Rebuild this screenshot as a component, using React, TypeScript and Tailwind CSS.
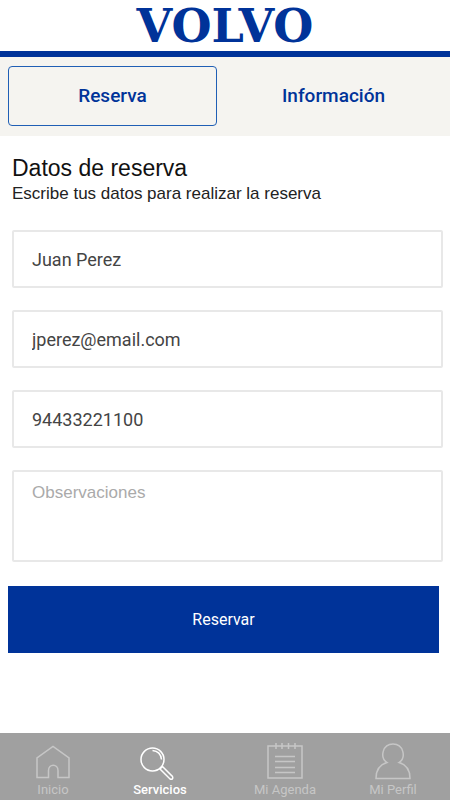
import type { ReactNode } from "react";

interface NavItem {
  label: string;
  icon: ReactNode;
  active?: boolean;
}

const fields = [
  { id: "nombre", label: "Nombre", type: "text", value: "Juan Perez" },
  { id: "email", label: "Email", type: "email", value: "jperez@email.com" },
  { id: "telefono", label: "Teléfono", type: "tel", value: "94433221100" },
];

const navItems: NavItem[] = [
  {
    label: "Inicio",
    icon: (
      <path d="M4 34.5V15L20 3.5L36 15V34.5H25V27.5C25 20.5 15.5 20.5 15.5 27.5V34.5Z" />
    ),
  },
  {
    label: "Servicios",
    active: true,
    icon: (
      <>
        <circle cx="12.5" cy="16.5" r="11.5" />
        <path d="M12.5 7.5C17.5 8 21 11.5 21.5 16.5" />
        <path d="M20 26L22.5 23.5L32.5 33.5C33.5 35.5 32 37 30 36Z" />
      </>
    ),
  },
  {
    label: "Mi Agenda",
    icon: (
      <>
        <path d="M3 3H37V35H3Z" />
        <path d="M11 0V6M17 0V6M23.5 0V6M30 0V6" />
        <path d="M10 13.5H30M10 18.5H30M10 24.5H30M10 29.5H30" />
      </>
    ),
  },
  {
    label: "Mi Perfil",
    icon: (
      <path d="M14 19.5C6.5 14.5 9.5 1 20 1C30.5 1 33.5 14.5 26 19.5C33.5 21.5 37 28 37 35.5H3C3 28 6.5 21.5 14 19.5Z" />
    ),
  },
];

function Header() {
  return (
    <header className="flex h-[57px] items-center justify-center border-b-[6px] border-[#003399] bg-white">
      <span className="font-['DejaVu_Serif',serif] text-[46px] leading-[50px] font-bold text-[#003399]">
        VOLVO
      </span>
    </header>
  );
}

function Tabs() {
  return (
    <div className="grid grid-cols-2 gap-3 bg-[#f5f4f0] pt-[9px] pr-3 pb-[10px] pl-2 text-[19px] font-medium text-[#003399]">
      <button
        type="button"
        className="h-[60px] rounded-[4px] border border-[#1f5fb5]"
      >
        Reserva
      </button>
      <button type="button" className="h-[60px]">
        Información
      </button>
    </div>
  );
}

function BookingForm() {
  return (
    <form className="pr-[7px] pl-3">
      <h1 className="mt-5 font-['Liberation_Sans',sans-serif] text-[23px] leading-6 text-[#111111]">
        Datos de reserva
      </h1>
      <p className="font-['Liberation_Sans',sans-serif] text-[17px] leading-7 text-[#222222]">
        Escribe tus datos para realizar la reserva
      </p>

      <div className="mt-[22px] flex flex-col gap-[22px]">
        {fields.map((field) => (
          <input
            key={field.id}
            id={field.id}
            type={field.type}
            aria-label={field.label}
            defaultValue={field.value}
            className="h-[58px] w-full rounded-[2px] border-2 border-[#e8e8e8] px-[18px] text-[18px] text-[#444444]"
          />
        ))}
        <textarea
          aria-label="Observaciones"
          placeholder="Observaciones"
          className="block h-[92px] w-full resize-none rounded-[2px] border-2 border-[#e8e8e8] px-[18px] py-[9px] font-['Liberation_Sans',sans-serif] text-[17px] leading-6 placeholder:text-[#aaaaaa]"
        />
      </div>

      <button
        type="submit"
        className="mt-6 -ml-1 h-[67px] w-full bg-[#003399] text-[16px] text-white"
      >
        Reservar
      </button>
    </form>
  );
}

function BottomNav() {
  return (
    <nav className="mt-auto grid h-[67px] grid-cols-[106fr_108fr_142fr_74fr] bg-[#a0a0a0] pt-[10px] pr-5">
      {navItems.map((item) => (
        <a
          key={item.label}
          href="#"
          className={`flex flex-col items-center gap-px text-[13px] leading-4 whitespace-nowrap ${
            item.active ? "font-medium text-white" : "text-[#c6c6c6]"
          }`}
        >
          <svg
            viewBox="0 0 40 38"
            className="h-[38px] w-10 shrink-0"
            fill="none"
            stroke="currentColor"
            strokeWidth="1.5"
            aria-hidden
          >
            {item.icon}
          </svg>
          {item.label}
        </a>
      ))}
    </nav>
  );
}

export default function App() {
  return (
    <div className="flex min-h-screen flex-col bg-white font-[Roboto,sans-serif]">
      <Header />
      <Tabs />
      <main className="pb-6">
        <BookingForm />
      </main>
      <BottomNav />
    </div>
  );
}
